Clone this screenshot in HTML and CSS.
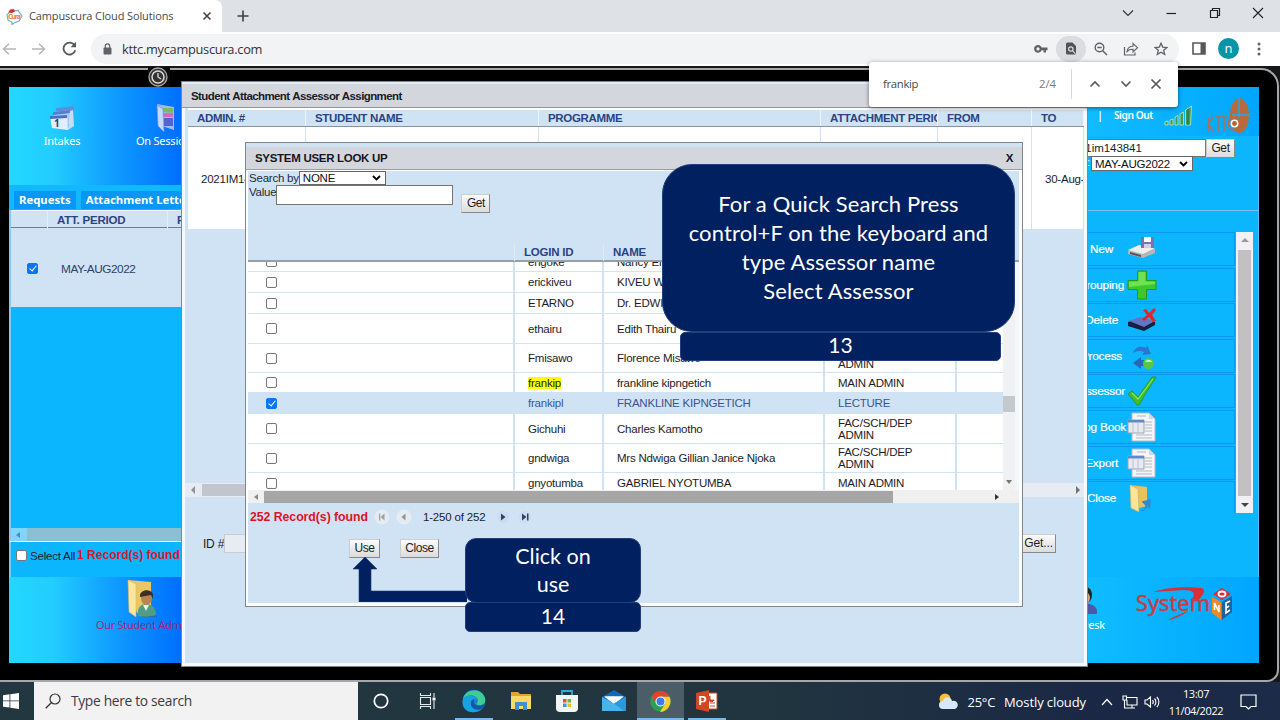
FILE: index.html
```html
<!DOCTYPE html>
<html lang="en">
<head>
<meta charset="utf-8">
<title>Campuscura Cloud Solutions</title>
<link rel="stylesheet" href="styles.css">
</head>
<body>
<div class="tabbar">
  <div class="tab">
    <svg class="favicon" width="17" height="17" viewBox="0 0 17 17"><path d="M4 3.500 12 2.500 16 8 13 13 8 15 6 16.500V14L2 12 1 7Z" fill="#fff" stroke="#69b5d2" stroke-width="1.200"/><path d="M2.500 4.500 4 1.500 8 1 9 3.500 6 5Z" fill="#d9302c"/><text x="2" y="11" font-size="7" font-weight="bold" fill="#e8813a" textLength="13">Cura</text></svg>
    <span class="tab-title">Campuscura Cloud Solutions</span>
    <svg class="tab-close" width="10" height="10" viewBox="0 0 10 10"><path d="M1.500 1.500 8.500 8.500M8.500 1.500 1.500 8.500" stroke="#3c4043" stroke-width="1.500"/></svg>
  </div>
  <svg class="tab-new" width="12" height="12" viewBox="0 0 12 12"><path d="M6 .5V11.500M.5 6H11.500" stroke="#3c4043" stroke-width="1.600"/></svg>
  <div class="win-controls">
    <svg width="12" height="12" viewBox="0 0 12 12"><path d="M1 3.500 6 8.500 11 3.500" fill="none" stroke="#333" stroke-width="1.100"/></svg>
    <svg width="12" height="12" viewBox="0 0 12 12"><path d="M1.500 6.500H11" stroke="#222" stroke-width="1.200"/></svg>
    <svg width="12" height="12" viewBox="0 0 12 12"><path d="M1.500 3.500H8.500V10.500H1.500ZM3.500 3.500V1.500H10.500V8.500H8.500" fill="none" stroke="#222" stroke-width="1.200"/></svg>
    <svg width="12" height="12" viewBox="0 0 12 12"><path d="M1 1 11 11M11 1 1 11" stroke="#222" stroke-width="1.100"/></svg>
  </div>
</div>
<div class="toolbar">
  <svg class="nav" width="14" height="12" viewBox="0 0 14 12"><path d="M14 6H1.500M7 .7 1.500 6 7 11.300" fill="none" stroke="#b4b6b9" stroke-width="1.500"/></svg>
  <svg class="nav" width="14" height="12" viewBox="0 0 14 12"><path d="M0 6H12.500M7 .7 12.500 6 7 11.300" fill="none" stroke="#b4b6b9" stroke-width="1.500"/></svg>
  <svg class="nav" width="15" height="15" viewBox="0 0 15 15"><path d="M12.700 4.500A6 6 0 1 0 13.300 9.200" fill="none" stroke="#55585c" stroke-width="1.800"/><path d="M14 .8V6.300H8.500Z" fill="#55585c"/></svg>
  <div class="omnibox">
    <svg width="9" height="12" viewBox="0 0 9 12"><rect x=".5" y="4.500" width="8" height="7" rx="1" fill="#5f6368"/><path d="M2.300 5V3A2.200 2.200 0 0 1 6.700 3V5" fill="none" stroke="#5f6368" stroke-width="1.200"/></svg>
    <span class="url">kttc.mycampuscura.com</span>
    <div class="omni-icons">
      <svg width="14" height="10" viewBox="0 0 14 10"><path d="M7.600 3.500H13.500V6.200H12V8.500H9.500V6.200H7.600A3.900 3.900 0 1 1 7.600 3.500ZM4 3.300A1.600 1.600 0 1 0 4 6.500 1.600 1.600 0 0 0 4 3.300Z" fill="#5f6368"/></svg>
      <div class="find-chip"><svg width="12" height="13" viewBox="0 0 12 13"><path d="M1 2A1.500 1.500 0 0 1 2.500.5H7.500L11 4V11A1.500 1.500 0 0 1 9.500 12.500H2.500A1.500 1.500 0 0 1 1 11Z" fill="#4f5357"/><circle cx="5.800" cy="7" r="2.200" fill="none" stroke="#dadce0" stroke-width="1.200"/><path d="M7.500 8.700 10.300 11.600" stroke="#dadce0" stroke-width="1.200"/></svg></div>
      <svg width="14" height="14" viewBox="0 0 14 14"><circle cx="5.500" cy="5.500" r="4.300" fill="none" stroke="#5f6368" stroke-width="1.400"/><path d="M8.700 8.700 13 13M3.300 5.500H7.700" stroke="#5f6368" stroke-width="1.500"/></svg>
      <svg width="16" height="14" viewBox="0 0 16 14"><path d="M1.500 5V13H12V10.500" fill="none" stroke="#5f6368" stroke-width="1.200"/><path d="M4 9.500C4.500 6 7 4.200 10 4.200V1.500L14.500 5.700 10 10V7.300C7.500 7.200 5.500 8 4 9.500Z" fill="none" stroke="#5f6368" stroke-width="1.100"/></svg>
      <svg width="14" height="14" viewBox="0 0 14 14"><path d="M7 1.300 8.700 5.100 12.900 5.500 9.700 8.300 10.700 12.400 7 10.200 3.300 12.400 4.300 8.300 1.100 5.500 5.300 5.100Z" fill="none" stroke="#5f6368" stroke-width="1.300"/></svg>
    </div>
  </div>
  <svg class="sidepanel" width="14" height="13" viewBox="0 0 14 13"><path d="M1 1H13V12H1Z" fill="none" stroke="#55585c" stroke-width="1.600"/><path d="M8.500 1H13V12H8.500Z" fill="#55585c"/></svg>
  <div class="avatar">n</div>
  <svg class="dots" width="4" height="14" viewBox="0 0 4 14"><g fill="#5f6368"><circle cx="2" cy="2" r="1.500"/><circle cx="2" cy="7" r="1.500"/><circle cx="2" cy="12" r="1.500"/></g></svg>
</div>

<div class="page">
  <div class="bezel">
  <div class="screen">
    <div class="screen-head">
      <div class="shortcut intakes">
        <svg width="28" height="26" viewBox="0 0 28 26"><path d="M8 2 26 0 25 13 9 15Z" fill="#5a8fdc"/><path d="M5 6 22 4 22 18 6 20Z" fill="#a9c9f2"/><path d="M5 6 22 4V7L5 9Z" fill="#4f7fcf"/><path d="M2 10 19 9 20 24 4 22Z" fill="#e4edfa"/><path d="M2 10 19 9 19 12 2 13Z" fill="#4372c8"/><path d="M20 24 26 20 25 4 22 5Z" fill="#c9dbf3"/><text x="6" y="21" font-size="10" font-weight="bold" fill="#23407e">1</text></svg>
        <span>Intakes</span>
      </div>
      <div class="shortcut session">
        <svg width="22" height="28" viewBox="0 0 22 28"><path d="M2 0 19 3 19 26 7 22Z" fill="#9bbcf3"/><path d="M8 4 18 4 18 9 8 8Z" fill="#7cbc5b"/><path d="M8 9 18 9 18 13 8 13Z" fill="#d56bc1"/><path d="M9 14H18V22H9Z" fill="#5960cf"/><path d="M2 1 8 5 9 28 3 22Z" fill="#c7dafb" stroke="#678ed8" stroke-width=".7"/></svg>
        <span>On Sessions</span>
      </div>
      <div class="account">
        <span class="bar">|</span><span class="signout">Sign Out</span>
        <svg class="signal" width="29" height="21" viewBox="0 0 29 21"><g fill="#3d9e57" stroke="#bfe7c6" stroke-width=".8"><path d="M1 17 4 16V20H1ZM6 15 9 14V20H6ZM11 12 14 10.500V20H11ZM16 9 19.500 7V20H16ZM21.500 5 27.500 1 26.500 20H21.500Z"/></g><path d="M24 4V20" stroke="#1d7138"/></svg>
        <svg class="kttc" width="44" height="37" viewBox="0 0 44 37"><ellipse cx="33.500" cy="18.500" rx="9.500" ry="17.500" fill="#b96a3c"/><path d="M33 0V21M26 18H44" stroke="#14aef5" stroke-width="1.400"/><path d="M2 20V34M7 20 2 27 7 34M9 20H15M12 20V34M15 20H21M18 20V34M29 21C20 18 20 34 29 33" fill="none" stroke="#b0704c" stroke-width="1.600"/><circle cx="28.500" cy="26.500" r="3.200" fill="#b9602c" stroke="#fff" stroke-width="1.500"/></svg>
      </div>
    </div>
    <div class="screen-main">
      <div class="left-panel">
        <div class="lp-tabs"><span class="lp-tab">Requests</span><span class="lp-tab">Attachment Letters</span></div>
        <div class="lp-table">
          <div class="lp-head"><span></span><span>ATT. PERIOD</span><span>R</span></div>
          <div class="lp-row"><i class="check on"></i><span>MAY-AUG2022</span></div>
        </div>
        <div class="lp-scroll"><i></i></div>
        <div class="lp-foot"><i class="check"></i><span>Select All</span><strong>1 Record(s) found</strong></div>
      </div>
      <div class="right-panel">
        <div class="rp-search"><span class="field">21im143841</span><span class="btn">Get</span></div>
        <div class="rp-period"><span>:</span><span class="select">MAY-AUG2022<svg width="9" height="6" viewBox="0 0 9 6"><path d="M1 1 4.500 4.500 8 1" fill="none" stroke="#000" stroke-width="1.800"/></svg></span></div>
        <div class="rp-box">
          <div class="menu">
            <div class="mi"><span class="w0">New</span><svg width="30" height="30" viewBox="0 0 30 30"><path d="M1 17 12 12 28 15 28 19 16 24 1 20Z" fill="#b5b6b8"/><path d="M1 16 12 11 28 14 16 20Z" fill="#eeeeec"/><path d="M3 18 14 21V23L3 20Z" fill="#555"/><path d="M14 3H27V14H14Z" fill="#8070b0"/><path d="M17 3H24V8H17Z" fill="#fff"/><path d="M17 10H24V14H17Z" fill="#d5cfe8"/></svg></div>
            <div class="mi"><span class="w1">Grouping</span><svg width="30" height="30" viewBox="0 0 30 30"><path d="M10.500 1H19.500V10.500H29V19.500H19.500V29H10.500V19.500H1V10.500H10.500Z" fill="#3bc92c" stroke="#209b1c"/><path d="M11.500 2H18.500V11.500H28V14L2 17V11.500H11.500Z" fill="#70e150"/></svg></div>
            <div class="mi"><span class="w2">Delete</span><svg width="30" height="30" viewBox="0 0 30 30"><path d="M1 17 13 13 28 17V20L17 26 1 21Z" fill="#161e42"/><path d="M2 16 13 12 28 16 17 22Z" fill="#6274c4"/><path d="M16 5 19 4 22 8 27 3 29 5 25 10 29 16 26 17 22 12 17 16 15 14 20 10Z" fill="#e4242c"/></svg></div>
            <div class="mi"><span class="w3">Process</span><svg width="30" height="30" viewBox="0 0 30 30"><path d="M6 12C9 5 14 5 19 7L20 4 24 13 15 14 17 11C13 9 9 10 6 12Z" fill="#2878cf"/><path d="M6 22 14 16V19H20V25H14V28Z" fill="#2468c0"/><circle cx="21.500" cy="22.500" r="5.500" fill="#54c747"/><path d="M18 21C20 17 25 19 25 21Z" fill="#c6efb5"/></svg></div>
            <div class="mi"><span class="w4">Assessor</span><svg width="30" height="30" viewBox="0 0 30 30"><path d="M1 18 5 15 11 21 25 1H29C23 11 17 20 12 29H10Z" fill="#42bd31" stroke="#259620" stroke-width=".8"/><path d="M5 17 11 23 26 3" fill="none" stroke="#87e561" stroke-width="1.200"/></svg></div>
            <div class="mi"><span class="w5">Log Book</span><svg width="30" height="30" viewBox="0 0 30 30"><path d="M5 1H22L28 7V29H5Z" fill="#f4f5f6" stroke="#b7bcc1"/><path d="M22 1V7H28" fill="#d3d8dc"/><path d="M10 4H19M10 10H25M18 13H25M18 16H25M18 19H25M9 23H25M9 26H25" stroke="#b4b9bf"/><path d="M1 8H17V21H1Z" fill="#e7eaf0" stroke="#9aa5b8"/><path d="M1 8H17V10.500H1Z" fill="#5e8bc8"/><path d="M6 11V21M11 11V21" stroke="#b9c2ce"/></svg></div>
            <div class="mi"><span class="w6">Export</span><svg width="30" height="30" viewBox="0 0 30 30"><path d="M5 1H22L28 7V29H5Z" fill="#f4f5f6" stroke="#b7bcc1"/><path d="M22 1V7H28" fill="#d3d8dc"/><path d="M10 4H19M10 10H25M18 13H25M18 16H25M18 19H25M9 23H25M9 26H25" stroke="#b4b9bf"/><path d="M1 8H17V21H1Z" fill="#e7eaf0" stroke="#9aa5b8"/><path d="M1 8H17V10.500H1Z" fill="#5e8bc8"/><path d="M6 11V21M11 11V21" stroke="#b9c2ce"/></svg></div>
            <div class="mi"><span class="w7">Close</span><svg width="30" height="30" viewBox="0 0 30 30"><path d="M3 2 20 4V23L8 26Z" fill="#e8c35c"/><path d="M3 2 11 6 12 29 4 25Z" fill="#fae59b" stroke="#d6b25a" stroke-width=".7"/><path d="M12 28C18 27 19 24 18 22L14.500 18.500 24 16 23 26 20.500 23.500C19 27 16 29 12 28Z" fill="#2d8ad3"/></svg></div>
          </div>
          <div class="vscroll"><i class="up"></i><b></b><i class="down"></i></div>
        </div>
      </div>
    </div>
    <div class="screen-foot">
      <div class="students">
        <svg width="30" height="38" viewBox="0 0 30 38"><path d="M1 1 24 3V30L10 34Z" fill="#e9c864"/><path d="M1 1 9 5 9 38 2 33Z" fill="#f9e79f" stroke="#d8b960" stroke-width=".6"/><ellipse cx="22" cy="37" rx="8" ry="1" fill="#27689c"/><path d="M11 37C10 28 14 25 19 25C26 25 29 30 29 36C24 38 16 38 11 37Z" fill="#4f9d85"/><path d="M16 26 19 32 22 26Z" fill="#eee"/><ellipse cx="19.500" cy="19" rx="5.500" ry="7" fill="#b98451"/><path d="M13 18C12 10 24 9 26 15V20L24 16Z" fill="#3b3028"/></svg>
        <span>Our Student Admin</span>
      </div>
      <div class="desk"><svg width="20" height="28" viewBox="0 0 20 28"><ellipse cx="9" cy="8" rx="6" ry="8" fill="#222"/><ellipse cx="8" cy="11" rx="5" ry="6" fill="#cba98c"/><path d="M0 27C0 16 18 13 20 24V27Z" fill="#4d58a8"/></svg><span>Help Desk</span></div>
      <svg class="sysone" width="98" height="36" viewBox="0 0 98 36"><path d="M17 6C35 0 55 1 66 2C71 4 66 10 62 15L56 13C60 7 57 4 48 4Z" fill="#d92f38"/><path d="M32 34C40 33 48 28 52 25C45 28 39 30 32 34Z" fill="#d92f38"/><text x="0" y="25" font-size="21" textLength="74" lengthAdjust="spacingAndGlyphs" fill="#c83d48" stroke="#c83d48" stroke-width=".5">System</text><path d="M77 8 86 2 95 8 86 14Z" fill="#dc2c37"/><path d="M76 11 85 16V34L76 27Z" fill="#ef8a27"/><path d="M86 16 96 10V26L86 34Z" fill="#1e639b"/><ellipse cx="86" cy="8" rx="3.500" ry="2.500" fill="none" stroke="#fff" stroke-width="1.800"/><path d="M78.500 24V17L83 26V19M94 15 90 17V27L94 24M90 22 93 20" fill="none" stroke="#fff" stroke-width="1.600"/></svg>
    </div>
  </div>
  </div>

  <div class="camera"><svg width="20" height="20" viewBox="0 0 20 20"><circle cx="10" cy="10" r="9" fill="#333" stroke="#aaa" stroke-width="1.300"/><circle cx="10" cy="10" r="6" fill="#333" stroke="#ddd" stroke-width="1.500"/><path d="M10 6V10L13 12" fill="none" stroke="#ddd" stroke-width="1.300"/></svg></div>

  <div class="assess">
    <div class="win-title">Student Attachment Assessor Assignment</div>
    <div class="as-table">
      <div class="as-head"><span>ADMIN. #</span><span>STUDENT NAME</span><span>PROGRAMME</span><span>ATTACHMENT PERIOD</span><span>FROM</span><span>TO</span></div>
      <div class="as-row"><span>2021IM143841</span><span></span><span></span><span></span><span></span><span>30-Aug-2022</span></div>
    </div>
    <div class="as-space"></div>
    <div class="as-scroll"><i></i><b></b><em></em></div>
    <div class="as-foot"><span>ID #</span><span class="as-input"></span><span class="btn">Get...</span></div>
  </div>

  <div class="lookup">
    <div class="lk-title"><span>SYSTEM USER LOOK UP</span><span>X</span></div>
    <div class="lk-body">
      <div class="lk-form">
        <div class="lk-fields">
          <div class="lk-line"><span>Search by</span><span class="select">NONE<svg width="9" height="6" viewBox="0 0 9 6"><path d="M1 1 4.500 4.500 8 1" fill="none" stroke="#000" stroke-width="1.800"/></svg></span></div>
          <div class="lk-line"><span>Value</span><span class="field"></span></div>
        </div>
        <span class="btn">Get</span>
      </div>
      <div class="lk-head"><span></span><span>LOGIN ID</span><span>NAME</span><span></span></div>
      <div class="lk-grid">
        <div class="rows">
          <div class="r h20"><span><i class="check"></i></span><span>engoke</span><span>Nancy En</span><span></span><span></span></div>
          <div class="r h21"><span><i class="check"></i></span><span>erickiveu</span><span>KIVEU W</span><span></span><span></span></div>
          <div class="r h21"><span><i class="check"></i></span><span>ETARNO</span><span>Dr. EDWI</span><span></span><span></span></div>
          <div class="r h30"><span><i class="check"></i></span><span>ethairu</span><span>Edith Thairu</span><span></span><span></span></div>
          <div class="r h29"><span><i class="check"></i></span><span>Fmisawo</span><span>Florence Misawo</span><span class="low">ADMIN</span><span></span></div>
          <div class="r h20"><span><i class="check"></i></span><span><mark>frankip</mark></span><span>frankline kipngetich</span><span>MAIN ADMIN</span><span></span></div>
          <div class="r h21 sel"><span><i class="check on"></i></span><span>frankipl</span><span>FRANKLINE KIPNGETICH</span><span>LECTURE</span><span></span></div>
          <div class="r h30"><span><i class="check"></i></span><span>Gichuhi</span><span>Charles Kamotho</span><span>FAC/SCH/DEP ADMIN</span><span></span></div>
          <div class="r h29"><span><i class="check"></i></span><span>gndwiga</span><span>Mrs Ndwiga Gillian Janice Njoka</span><span>FAC/SCH/DEP ADMIN</span><span></span></div>
          <div class="r h21"><span><i class="check"></i></span><span>gnyotumba</span><span>GABRIEL NYOTUMBA</span><span>MAIN ADMIN</span><span></span></div>
        </div>
        <div class="lk-vs"><b></b><i class="down"></i></div>
      </div>
      <div class="lk-hs"><i class="left"></i><b></b><i class="right"></i></div>
      <div class="pager"><strong>252 Record(s) found</strong>
        <svg width="16" height="16" viewBox="0 0 16 16"><circle cx="8" cy="8" r="7.500" fill="#e6ebf1"/><path d="M5 4.500H6.200V11.500H5ZM10.500 4.500 6.500 8 10.500 11.500Z" fill="#9aa3ad"/></svg>
        <svg width="16" height="16" viewBox="0 0 16 16"><circle cx="8" cy="8" r="7.500" fill="#e6ebf1"/><path d="M9.500 4.500 5.500 8 9.500 11.500Z" fill="#8b949f"/></svg>
        <span>1-250 of 252</span>
        <svg width="16" height="16" viewBox="0 0 16 16"><circle cx="8" cy="8" r="6" fill="#c8dcf2"/><path d="M6 4.500 10.500 8 6 11.500Z" fill="#34425e"/></svg>
        <svg width="16" height="16" viewBox="0 0 16 16"><circle cx="8" cy="8" r="6" fill="#c8dcf2"/><path d="M5 4.500 9.500 8 5 11.500ZM10 4.500H11.500V11.500H10Z" fill="#34425e"/></svg>
      </div>
      <div class="lk-actions"><span class="btn">Use</span><span class="btn">Close</span></div>
    </div>
  </div>

  <svg class="arrow" width="114" height="46" viewBox="0 0 114 46"><path d="M12 1 24 13H18V35H114V46H6V13H0Z" fill="#00205f" stroke="#1d3b76" stroke-width=".6"/></svg>
  <div class="note note-search">For a Quick Search Press<br>control+F on the keyboard and<br>type Assessor name<br>Select Assessor</div>
  <div class="step step-13">13</div>
  <div class="note note-use">Click on<br>use</div>
  <div class="step step-14">14</div>
</div>

<div class="findbar">
  <span class="find-text">frankip</span><span class="find-count">2/4</span>
  <div class="find-nav">
    <svg width="12" height="12" viewBox="0 0 12 12"><path d="M1.500 8.500 6 4 10.500 8.500" fill="none" stroke="#55585c" stroke-width="1.600"/></svg>
    <svg width="12" height="12" viewBox="0 0 12 12"><path d="M1.500 3.500 6 8 10.500 3.500" fill="none" stroke="#55585c" stroke-width="1.600"/></svg>
    <svg width="12" height="12" viewBox="0 0 12 12"><path d="M1.500 1.500 10.500 10.500M10.500 1.500 1.500 10.500" stroke="#55585c" stroke-width="1.700"/></svg>
  </div>
</div>

<div class="taskbar">
  <div class="start"><svg width="16" height="16" viewBox="0 0 16 16"><path d="M0 2.300 6.500 1.300V7.500H0ZM7.300 1.200 16 0V7.500H7.300ZM0 8.300H6.500V14.600L0 13.700ZM7.300 8.300H16V16L7.300 14.700Z" fill="#fff"/></svg></div>
  <div class="search"><svg width="16" height="16" viewBox="0 0 16 16"><circle cx="10" cy="6" r="5" fill="none" stroke="#333" stroke-width="1.200"/><path d="M6.300 9.700.7 15.300" stroke="#333" stroke-width="1.300"/></svg><span>Type here to search</span></div>
  <div class="app"><svg width="16" height="16" viewBox="0 0 16 16"><circle cx="8" cy="8" r="6.700" fill="none" stroke="#fff" stroke-width="1.700"/></svg></div>
  <div class="app"><svg width="17" height="16" viewBox="0 0 17 16"><path d="M1.500 0V2.500H11.500V0M1.500 16V13.500H11.500V16M1.500 4.500H11.500V11.500H1.500ZM15 0V4M15 8V16" fill="none" stroke="#e6eaec" stroke-width="1.100"/><path d="M13.500 4.500H16.500V7.500H13.500Z" fill="#fff"/></svg></div>
  <div class="app run"><svg width="24" height="24" viewBox="0 0 24 24"><circle cx="12" cy="12" r="11.300" fill="#1683d2"/><path d="M1 10C3 0 19-2 23 9C24 14 21 17 16 16C13 15 16 14 16 11C14 5 5 5 1 10Z" fill="#42cc91"/><path d="M1 10C5 5 12 6 15 10C11 9 8 12 9 16C10 20 15 22 20 20C10 27-2 22 1 10Z" fill="#17a3e2"/><path d="M9 13C8 20 15 22 20 20C22 18 23 16 22 15C18 18 10 17 12 10C10 11 9 12 9 13Z" fill="#1258a4"/></svg></div>
  <div class="app"><svg width="22" height="20" viewBox="0 0 22 20"><path d="M1 1H8L10 3H21V8H1Z" fill="#e1a52d"/><path d="M1 5H21V18H1Z" fill="#fbd96b"/><path d="M5 11H17V19H13V15H9V19H5Z" fill="#3c91d6"/></svg></div>
  <div class="app"><svg width="24" height="24" viewBox="0 0 24 24"><path d="M7 7V2H17V7" fill="none" stroke="#32ace4" stroke-width="1.800"/><path d="M1 6H23V19Q23 23 19 23H5Q1 23 1 19Z" fill="#f3f4f5"/><path d="M8 10H11.500V13.500H8Z" fill="#e75333"/><path d="M12.500 10H16V13.500H12.500Z" fill="#6fb83c"/><path d="M8 14.500H11.500V18H8Z" fill="#2f9cdf"/><path d="M12.500 14.500H16V18H12.500Z" fill="#f2b928"/></svg></div>
  <div class="app"><svg width="24" height="22" viewBox="0 0 24 22"><path d="M0 7 12 0 24 7V14H0Z" fill="#1468b4"/><path d="M2 6.500H22L12 14Z" fill="#fff"/><path d="M0 7 12 13.500 24 7V21H0Z" fill="#48b4ee"/><path d="M3 6.500H21L12 13.500Z" fill="#fff"/><path d="M24 7V21H22L12 13.500Z" fill="#249ae0"/></svg></div>
  <div class="app active"><svg width="21" height="21" viewBox="0 0 21 21"><circle cx="10.500" cy="10.500" r="10.300" fill="#2ba04e"/><path d="M1.500 5.500C6-2 16-1.500 19.500 5.700H10.500L6.500 12.500Z" fill="#e34133"/><path d="M19.500 5.700C23 13 17 21 10 20.800L15 13C16 10 14 7 10.500 5.700Z" fill="#f9ce33"/><circle cx="10.500" cy="10.500" r="5" fill="#fff"/><circle cx="10.500" cy="10.500" r="4" fill="#3b7ee8"/></svg></div>
  <div class="app run"><svg width="22" height="22" viewBox="0 0 22 22"><path d="M10 3H21V19H10Z" fill="#fff" stroke="#d24625"/><path d="M14 6A3 3 0 1 0 18 10H14ZM14 13H19M14 16H19" fill="#d24625" stroke="#d24625"/><path d="M0 3 13 0V22L0 19Z" fill="#d24625"/><text x="2.500" y="15" font-size="12" font-weight="bold" fill="#fff">P</text></svg></div>
  <div class="tray">
    <svg width="20" height="17" viewBox="0 0 20 17"><circle cx="6" cy="6" r="5.500" fill="#f9bd3e"/><path d="M4 16A4 4 0 0 1 4 8C5 3 12 3 13 8A4 4 0 0 1 16 16Z" fill="#d5e9fb"/></svg>
    <span class="temp">25°C</span><span class="cond">Mostly cloudy</span>
    <svg class="chev" width="12" height="8" viewBox="0 0 12 8"><path d="M1 7 6 1.500 11 7" fill="none" stroke="#fff" stroke-width="1.200"/></svg>
    <svg class="net" width="16" height="14" viewBox="0 0 16 14"><path d="M5 2.500H15V10H5V5M10 10V12.500M5 13H13M2.500 5V13H5M1 1H4.500V5H1Z" fill="none" stroke="#fff" stroke-width="1.100"/></svg>
    <svg class="vol" width="17" height="14" viewBox="0 0 17 14"><path d="M1 5H3L6.500 2V12L3 9H1ZM8.500 5A3 3 0 0 1 8.500 9M10.500 3.500A5 5 0 0 1 10.500 10.500M12.800 2A7 7 0 0 1 12.800 12" fill="none" stroke="#fff" stroke-width="1.100"/></svg>
    <div class="clock"><span>13:07</span><span>11/04/2022</span></div>
    <svg class="action" width="17" height="16" viewBox="0 0 17 16"><path d="M1 1H16V12.500H11L8.500 15 6 12.500H1Z" fill="none" stroke="#fff" stroke-width="1.200"/></svg>
  </div>
</div>
</body>
</html>
```

FILE: styles.css
```css
* { box-sizing: border-box; }
body { margin: 0; width: 1280px; height: 720px; overflow: hidden; position: relative; display: flex; flex-direction: column; font: 11.5px/12px "Liberation Sans", Arial, sans-serif; color: #1c1c28; background: #000; }
svg { display: block; flex: none; }
span, strong { white-space: nowrap; }

/* Browser chrome */
.tabbar { height: 32px; flex: none; background: #dee1e6; display: flex; align-items: center; font-family: "Open Sans", "Noto Sans", sans-serif; }
.tab { width: 222px; height: 32px; background: #fff; border-radius: 0 7px 0 0; display: flex; align-items: center; padding-left: 6px; }
.tab-title { margin-left: 6px; width: 173px; font-size: 11px; color: #45494d; letter-spacing: -.12px; }
.tab-new { margin-left: 15px; }
.win-controls { margin-left: auto; display: flex; gap: 31.500px; padding: 0 16px 6px 0; }
.toolbar { height: 34px; flex: none; background: #fff; display: flex; align-items: center; padding: 0 0 1px 2px; }
.nav { margin-right: 16px; }
.omnibox { width: 1088px; height: 30px; margin-left: -2px; border-radius: 15px; background: #f1f3f4; display: flex; align-items: center; padding: 0 11px 0 12px; font-family: "Open Sans", "Noto Sans", sans-serif; }
.url { margin-left: 10px; font-size: 12.800px; color: #303336; letter-spacing: -.27px; }
.omni-icons { margin-left: auto; display: flex; align-items: center; gap: 15px; }
.find-chip { width: 30px; height: 26px; margin-right: -7px; margin-left: -7px; border-radius: 13px; background: #dadce0; display: flex; align-items: center; justify-content: center; }
.sidepanel { margin-left: 13px; }
.avatar { width: 21px; height: 21px; margin-left: 12px; border-radius: 50%; background: #0795a6; color: #fff; font: 13px/20px "Open Sans", sans-serif; text-align: center; }
.dots { margin-left: 18px; }
.findbar { position: absolute; left: 869px; top: 62px; width: 309px; height: 45px; background: #fff; border-radius: 3px; box-shadow: 0 1px 4px rgba(0,0,0,.5); display: flex; align-items: center; padding: 0 0 2px 14px; font: 11.300px "Open Sans", sans-serif; color: #45494d; }
.find-text { letter-spacing: -.3px; }
.find-count { margin-left: auto; color: #777b80; }
.find-nav { height: 30px; margin-left: 15px; border-left: 1px solid #d5d8dc; display: flex; align-items: center; gap: 18.500px; padding: 0 16px 0 17px; }

/* Monitor frame */
.page { height: 616px; flex: none; position: relative; background: #15181a; letter-spacing: -.22px; }
.bezel { height: 614px; margin-top: 2px; margin-left: -6px; width: 1285px; border: 2px solid #a5a7aa; border-left: 0; border-radius: 0 18px 12px 0; background: #000; padding: 17px 0 0 15px; }
.screen { width: 1250px; height: 576px; display: flex; flex-direction: column; overflow: hidden; background: linear-gradient(90deg, #22d8ff 0, #22ccff 45px, #0f9cff 105px, #0070ff 170px, #0070ff 400px, #10bcff 1080px, #00a6ff 1250px); }
.screen-head { height: 49px; flex: none; display: flex; position: relative; font-family: "Noto Sans", sans-serif; color: #fff; }
.screen-main { height: 441px; flex: none; display: flex; justify-content: space-between; }
.screen-foot { height: 86px; flex: none; position: relative; display: flex; font-family: "Noto Sans", sans-serif; }
.camera { position: absolute; left: 148px; top: 1px; width: 22px; height: 20px; background: #0b0c0d; }
.shortcut { display: flex; flex-direction: column; align-items: center; height: 60px; font-size: 11px; line-height: 14px; }
.intakes { width: 72px; margin-left: 17px; padding-top: 19px; gap: 2px; }
.session { width: 76px; margin-left: 30px; padding-top: 17px; gap: 2px; }
.account { margin-left: auto; padding: 10px 9px 0 0; display: flex; align-items: flex-start; font-size: 11px; }
.bar, .signout { font-weight: 600; padding-top: 12px; }
.signout { margin: 0 11px; font-size: 10.200px; letter-spacing: -.45px; }
.signal { margin: 8px 13px 0 0; }

.left-panel { width: 185px; padding-top: 49px; }
.lp-tabs { height: 25px; background: #10b8fd; display: flex; align-items: flex-end; gap: 5px; padding: 0 0 1px 5px; font: bold 11.300px/18px "Noto Sans", sans-serif; letter-spacing: 0; color: #fff; }
.lp-tab { background: #0797f7; padding: 0 5px; height: 18px; }
.lp-table { height: 318px; background: #0cb6ff; border-left: 2px solid #8ac6f3; }
.lp-head { height: 18px; background: #d0e3f5; border-top: 1px solid #f2f7fb; border-bottom: 1px solid #707d8a; display: grid; grid-template-columns: 36px 120px 1fr; font: bold 11.500px/18px "Liberation Sans", sans-serif; color: #2b4382; }
.lp-head span { padding-left: 9px; border-left: 1px solid #e5eef7; }
.lp-head span:first-child { border: 0; }
.lp-row { height: 79px; background: #d0e3f5; display: flex; align-items: center; padding: 2px 0 0 16px; color: #2f3f69; }
.lp-row span { margin-left: 23px; font-size: 11.800px; letter-spacing: -.45px; }
.check { display: block; width: 11px; height: 11px; border: 1px solid #777; border-radius: 2px; background: #fff; flex: none; }
.check.on { background: #0b75f5; border-color: #0b75f5; position: relative; }
.check.on::after { content: ""; position: absolute; left: 2.500px; top: 0; width: 3px; height: 6px; border: solid #fff; border-width: 0 1.600px 1.600px 0; transform: rotate(40deg); }
.lp-scroll { height: 14px; background: linear-gradient(90deg, #80d5fb 16px, #8bbfd4 16px); border-left: 2px solid #8ac6f3; border-bottom: 1px solid #fff; display: flex; align-items: center; padding-left: 5px; }
.lp-scroll i { border: solid transparent; border-width: 3.500px 4px 3.500px 0; border-right-color: #4a8fb5; }
.lp-foot { height: 35px; background: #0cb6ff; border-left: 2px solid #7cc8f8; display: flex; align-items: center; padding: 0 0 9px 5px; }
.lp-foot span { margin: 2px 2px 0 3px; }
.lp-foot strong { color: #d9172c; font-size: 12px; letter-spacing: 0; }

.right-panel { width: 230px; background: #0cb6ff; border-right: 1px solid #63b9f7; display: flex; flex-direction: column; padding-top: 3px; }
.field { display: block; background: #fff; border: 1px solid #767676; }
.btn { display: block; background: linear-gradient(#fbfbfb, #dcdcdc); border: 1px solid; border-color: #ccc #888 #888 #ccc; color: #1d1d1d; text-align: center; height: 19px; line-height: 17px; font-size: 12px; letter-spacing: -.4px; }
.rp-search { display: flex; padding-left: 11px; height: 17px; }
.rp-search .field { width: 166px; height: 18px; line-height: 17px; padding-left: 38px; letter-spacing: -.05px; }
.rp-search .btn { width: 29px; }
.rp-period { display: flex; height: 14px; padding-left: 58px; gap: 1px; color: #fff; position: relative; }
.select { display: flex; align-items: center; justify-content: space-between; background: #fff; border: 1px solid #666; color: #111; height: 15px; padding: 0 4px 0 3px; }
.rp-period .select { width: 102px; }
.rp-box { margin-top: 40px; flex: 1; border-top: 1px solid #7abdf2; display: flex; padding: 21px 5px 0 28px; }
.menu { width: 178px; height: 281px; overflow: hidden; }
.mi { height: 34px; margin-bottom: 1.600px; border: 1px solid #0999f5; display: grid; grid-template-columns: 69px 30px; align-items: center; color: #fff; -webkit-text-stroke: .2px #fff; }
.mi span { justify-self: end; font-size: 11.800px; }
.mi .w0 { margin-right: 14px; } .mi .w1 { margin-right: 3px; } .mi .w2 { margin-right: 9px; } .mi .w3 { margin-right: 5px; }
.mi .w4 { margin-right: 2px; } .mi .w5 { margin-right: 1px; } .mi .w6 { margin-right: 9px; } .mi .w7 { margin-right: 11px; }
.vscroll { width: 17px; height: 281px; background: #f0f1f2; margin-left: 1px; display: flex; flex-direction: column; align-items: center; justify-content: space-between; padding: 6px 0; }
.vscroll b { width: 13px; height: 246px; background: #c1c1c1; }
.up { border: solid transparent; border-width: 0 4px 4px; border-bottom-color: #999; }
.down { border: solid transparent; border-width: 4px 4px 0; border-top-color: #444; }

.students { margin-left: 87px; padding-top: 2px; width: 110px; font-size: 11px; line-height: 16px; letter-spacing: -.3px; color: #b01f80; }
.students svg { margin-left: 31px; }
.desk { margin-left: 836px; padding-top: 10px; color: #fff; font-size: 11px; line-height: 16px; display: flex; flex-direction: column; width: 66px; align-items: flex-end; padding-right: 3px; }
.desk svg { margin-right: 8px; margin-bottom: 2px; }
.sysone { margin: 9px 0 0 28px; letter-spacing: 0; }

/* Assessor assignment window */
.assess { position: absolute; left: 181px; top: 15px; width: 907px; height: 586px; background: #d0e3f5; border: 1px solid #7e8890; box-shadow: inset 0 0 0 3px #f7fafd; padding: 0 3px 3px; }
.win-title { height: 26px; margin: 0 -3px; background: #d4d6dd; border-top: 2px solid #e1edf9; border-bottom: 1px solid #929498; font-weight: bold; letter-spacing: -.6px; word-spacing: .5px; line-height: 25px; padding-left: 9px; color: #1b1b26; }
.as-table { margin-left: 3px; padding-top: 2px; background: #fff; }
.as-head, .as-row { display: grid; grid-template-columns: 118px 233px 282px 117px 94px 1fr; overflow: hidden; }
.as-head { height: 17px; background: #d0e3f5; border-bottom: 1px solid #8994a0; font-weight: bold; line-height: 17px; letter-spacing: -.32px; color: #2b4382; }
.as-head span { padding-left: 9px; overflow: hidden; border-right: 1px solid #eef5fc; }
.as-row { height: 102px; align-items: stretch; }
.as-row span { border-right: 1px solid #cfe2f6; padding: 46px 0 0 13px; overflow: hidden; }
.as-space { height: 254px; }
.as-scroll { height: 14px; background: #e7ebf3; display: flex; align-items: center; padding: 0 4px 0 6px; }
.as-scroll i { border: solid transparent; border-width: 4px 4px 4px 0; border-right-color: #8e9299; }
.as-scroll b { height: 12px; width: 600px; margin-left: 7px; background: #c1c6ce; }
.as-scroll em { margin-left: auto; border: solid transparent; border-width: 4px 0 4px 4px; border-left-color: #70757d; }
.as-foot { display: flex; padding: 37px 0 0 18px; align-items: center; font-size: 12px; }
.as-input { width: 797px; height: 19px; background: #e7ecf3; border: 1px solid #c7ccd2; }
.as-foot .btn { width: 35px; letter-spacing: -.1px; }

/* User lookup window */
.lookup { position: absolute; left: 245px; top: 76px; width: 778px; height: 465px; border: 1.500px solid #7f858b; background: #fff; display: flex; flex-direction: column; padding-bottom: 3px; }
.lk-title { height: 27px; flex: none; background: #d4d6dd; border-top: 4px solid #d0e3f5; border-bottom: 1px solid #9a9da2; display: flex; justify-content: space-between; align-items: center; padding: 0 9px 1px; font-weight: bold; letter-spacing: -.3px; color: #15151f; }
.lk-body { flex: 1; margin: 1px 3px 0 2px; background: #d0e3f5; }
.lk-form { height: 73px; display: flex; color: #282832; }
.lk-line { display: flex; align-items: flex-start; height: 14px; line-height: 14px; }
.lk-line > span:first-child { padding-left: 1px; }
.lk-line .select { width: 87px; height: 14px; }
.lk-line .field { width: 177px; height: 20px; }
.lk-form > .btn { margin: 23px 0 0 8px; width: 29px; }
.lk-head, .r { display: grid; grid-template-columns: 267px 89px 221px 132px 1fr; }
.lk-head { height: 18px; border-bottom: 2px solid #969ea6; font-weight: bold; line-height: 17px; color: #2b4382; }
.lk-head span { padding-left: 9px; border-right: 1px solid #dfeaf5; }
.lk-head span:nth-child(n+3) { border: 0; }
.lk-grid { height: 228px; overflow: hidden; display: flex; background: #fff; }
.rows { flex: 1; margin-top: -10px; }
.r > span { border: solid #d0e3f5; border-width: 0 2px 1.500px 0; display: flex; align-items: center; padding-left: 13px; white-space: normal; }
.r > span:first-child { padding-left: 18px; }
.r > span:last-child { border-right: 0; }
.r > span:nth-child(4) { padding-right: 30px; }
.r > span.low { padding-top: 12px; }
.h20 { height: 20px; } .h21 { height: 21px; } .h29 { height: 29px; } .h30 { height: 30px; }
.sel { background: #d0e3f5; color: #3b5590; }
mark { background: #ff0; color: inherit; }
.lk-vs { width: 16px; background: #f0f1f3; border-right: 4px solid #f4f7fa; display: flex; flex-direction: column; align-items: center; padding-top: 134px; }
.lk-vs b { width: 12px; height: 16px; background: #c4c8cf; }
.lk-vs i { margin-top: 68px; border-width: 4px 3.500px 0; border-top-color: #777; }
.lk-hs { height: 13px; background: #f0f0f0; display: flex; align-items: center; padding-left: 6px; }
.lk-hs b { width: 629px; height: 12px; margin-left: 6px; background: #a6a6a6; }
.left { border: solid transparent; border-width: 3.500px 4px 3.500px 0; border-right-color: #888; }
.right { margin-left: 102px; border: solid transparent; border-width: 3.500px 0 3.500px 4px; border-left-color: #333; }
.pager { height: 29px; display: flex; align-items: center; padding: 0 0 2px 2px; }
.pager strong { color: #e0131f; font-size: 12.300px; letter-spacing: -.05px; margin-right: 6px; }
.pager svg { margin-right: 6px; }
.pager span { margin: 0 10px 0 5px; letter-spacing: -.18px; }
.lk-actions { display: flex; gap: 20px; padding: 7px 0 0 101px; }
.lk-actions .btn:first-child { width: 31px; }
.lk-actions .btn:last-child { width: 39px; }

/* Callouts */
.note, .step { position: absolute; background: #00205f; color: #fff; border: 1px solid #21407b; font-family: Lato, sans-serif; text-align: center; }
.note-search { left: 662px; top: 98px; width: 353px; height: 168px; border-radius: 30px; font-size: 22px; line-height: 29px; letter-spacing: .12px; padding-top: 24px; }
.note-use { left: 465px; top: 472px; width: 176px; height: 65px; border-radius: 11px; font-size: 21.500px; line-height: 28px; letter-spacing: 0; padding-top: 3px; }
.step-13 { left: 680px; top: 266px; width: 321px; height: 29px; border-radius: 5px; font-size: 21px; line-height: 24px; letter-spacing: 0; }
.step-14 { left: 465px; top: 536px; width: 176px; height: 30px; border-radius: 5px; font-size: 21px; line-height: 26px; letter-spacing: 0; }
.arrow { position: absolute; left: 353px; top: 490px; }

/* Taskbar */
.taskbar { height: 38px; flex: none; background: linear-gradient(90deg, #22373f 0, #20353f 60%, #1b2845 85%, #1c2b48); display: flex; color: #fff; font-family: "Open Sans", "Noto Sans", sans-serif; }
.start { width: 34px; display: flex; align-items: center; padding-left: 3px; }
.search { width: 324px; background: #f2f2f2; display: flex; align-items: center; gap: 10px; padding-left: 11px; color: #3c3c3c; font-size: 13.800px; letter-spacing: -.32px; }
.app { width: 46.500px; display: flex; align-items: center; justify-content: center; font-family: "Liberation Sans", sans-serif; }
.run { background: linear-gradient(#76b9ed, #76b9ed) 50% 100% / 38px 2px no-repeat; }
.active { background: linear-gradient(#76b9ed, #76b9ed) 0 100% / 100% 2px no-repeat, #4b5d66; }
.tray { margin-left: auto; display: flex; align-items: center; padding: 1px 23px 0 0; font-size: 13px; }
.temp { margin: 0 9px 0 9px; letter-spacing: -.3px; }
.cond { letter-spacing: -.1px; }
.chev { margin-left: 15px; }
.net { margin-left: 9px; }
.vol { margin-left: 6px; }
.clock { width: 60px; margin: 0 14px 0 5px; display: flex; flex-direction: column; align-items: center; font-size: 11px; line-height: 17px; letter-spacing: -.4px; }
```
